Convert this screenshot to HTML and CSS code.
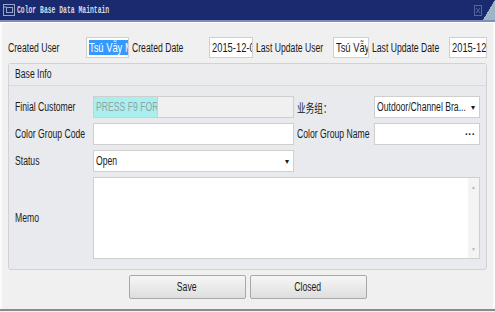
FILE: index.html
```html
<!DOCTYPE html>
<html>

<head>
    <title>Color Base Data Maintain</title>
    <link rel="stylesheet" href="styles.css">
</head>

<body>
    <div class="window">
        <div class="titlebar">
            <svg class="app-icon" width="12" height="12" viewBox="0 0 12 12">
                <rect x="0.5" y="0.5" width="11" height="11" fill="none" stroke="#9aa6c8" />
                <rect x="3.5" y="3.5" width="6" height="5" fill="none" stroke="#9aa6c8" />
                <line x1="0.5" y1="3" x2="3.5" y2="3" stroke="#9aa6c8" />
            </svg>
            <span class="title">Color Base Data Maintain</span>
            <span class="close">
                <svg width="8" height="11" viewBox="0 0 8 11">
                    <rect x="0.5" y="0.5" width="7" height="10" fill="none" stroke="#5866a0" />
                    <path d="M2 3 L6 8 M6 3 L2 8" stroke="#5866a0" />
                </svg>
            </span>
            <span class="corner"></span>
        </div>
        <div class="titleline"></div>

        <div class="content">
            <div class="head-row">
                <label class="w78">Created User</label>
                <span class="field w43"><span class="n selected">Tsú Vẫy Minh</span></span>
                <label class="w77">Created Date</label>
                <span class="field w44"><span class="n">2015-12-01</span></span>
                <label class="w77">Last Update User</label>
                <span class="field w36"><span class="n">Tsú Vẫy</span></span>
                <label class="w77">Last Update Date</label>
                <span class="field w38"><span class="n">2015-12-01</span></span>
            </div>

            <div class="group">
                <div class="group-head"><span class="n">Base Info</span></div>
                <div class="group-body">
                    <label>Finial Customer</label>
                    <span class="field lookup"><span class="hint"><span class="n">PRESS F9 FOR</span></span></span>
                    <label>业务组：</label>
                    <span class="field combo"><span class="val"><span class="n">Outdoor/Channel Bra...</span></span><span class="arrow">▾</span></span>

                    <label>Color Group Code</label>
                    <span class="field"></span>
                    <label>Color Group Name</label>
                    <span class="field combo"><span class="val"></span><span class="dots">···</span></span>

                    <label>Status</label>
                    <span class="field combo"><span class="val"><span class="n">Open</span></span><span class="arrow">▾</span></span>
                    <span></span>
                    <span></span>

                    <label>Memo</label>
                    <div class="memo">
                        <div class="scroll"><span>▲</span><span>▼</span></div>
                    </div>
                </div>
            </div>

            <div class="buttons">
                <button type="button"><span class="n mid">Save</span></button>
                <button type="button"><span class="n mid">Closed</span></button>
            </div>
        </div>
        <div class="bottomline"></div>
    </div>
</body>

</html>
```

FILE: styles.css
```css
/* Win32 style dialog */
body {
    margin: 0;
    width: 495px;
    height: 312px;
    overflow: hidden;
    background: #f0f0f0;
    font-family: "Liberation Sans", "Noto Sans CJK SC", sans-serif;
    font-size: 12px;
    color: #1a1a1a;
}

/* the dialog font is a narrow one, squeeze the text */
label,
.n {
    display: inline-block;
    white-space: nowrap;
    transform: scaleX(0.72);
    transform-origin: left center;
}

.n.mid {
    transform-origin: center;
}

.window {
    height: 312px;
    display: flex;
    flex-direction: column;
}

.titlebar {
    height: 20px;
    background: #1a2a6e;
    display: flex;
    align-items: center;
    position: relative;
    overflow: hidden;
}

.app-icon {
    margin-left: 3px;
}

.title {
    margin-left: 2px;
    font-family: "Liberation Mono", monospace;
    font-size: 10px;
    font-weight: bold;
    color: #d6d8e4;
    white-space: nowrap;
    transform: scaleX(0.64);
    transform-origin: left center;
}

.close {
    margin-left: auto;
    margin-right: 13px;
    display: flex;
}

.corner {
    position: absolute;
    right: 0;
    top: 0;
    width: 12px;
    height: 20px;
    background: linear-gradient(to top left, #9fb4c4 50%, transparent 51%);
}

.titleline {
    height: 2px;
    background: #7d8fb8;
    border-bottom: 1px solid #ffffff;
}

.content {
    flex: 1;
    padding: 0 6px;
    border-left: 2px solid #fafafa;
    border-right: 2px solid #fafafa;
}

.head-row {
    display: flex;
    align-items: center;
    margin-top: 14px;
    height: 21px;
}

.head-row label {
    display: block;
    flex: none;
}

.w78 { width: 78px; }
.w77 { width: 77px; margin-left: 3px; }
.w43 { width: 43px; }
.w44 { width: 44px; }
.w36 { width: 36px; }
.w38 { width: 38px; }

.field {
    box-sizing: border-box;
    height: 22px;
    border: 1px solid #cfcfcf;
    background: #ffffff;
    display: flex;
    align-items: center;
    padding-left: 2px;
    overflow: hidden;
}

.head-row .field {
    height: 21px;
    font-size: 13px;
    flex: none;
}

.selected {
    background: #3399ff;
    color: #ffffff;
    line-height: 15px;
}

.group {
    margin-top: 5px;
    height: 207px;
    box-sizing: border-box;
    border: 1px solid #d2d2d6;
    border-radius: 3px;
    background: #e9eaed;
}

.group-head {
    height: 21px;
    line-height: 21px;
    padding-left: 6px;
    background: #ececee;
    border-bottom: 1px solid #dadade;
}

.group-body {
    display: grid;
    grid-template-columns: 75px 201px 74px 106px;
    column-gap: 3px;
    row-gap: 5px;
    grid-template-rows: 22px 22px 22px 82px;
    padding: 10px 0 0 6px;
    align-items: center;
}

.lookup {
    background: #f0f0f0;
    padding-left: 0;
}

.hint {
    box-sizing: border-box;
    background: #aaeeee;
    color: #8fa6a8;
    height: 100%;
    width: 64px;
    display: flex;
    align-items: center;
    padding-left: 2px;
    border-right: 1px solid #cfcfcf;
    overflow: hidden;
}

.combo .val {
    flex: 1;
    overflow: hidden;
}

.arrow {
    font-size: 8px;
    width: 12px;
    text-align: center;
}

.dots {
    width: 14px;
    font-size: 10px;
    font-weight: bold;
}

.memo {
    grid-column: 2 / 5;
    height: 82px;
    box-sizing: border-box;
    border: 1px solid #cfcfcf;
    background: #ffffff;
    display: flex;
    justify-content: flex-end;
}

.scroll {
    width: 11px;
    background: #f4f4f4;
    display: flex;
    flex-direction: column;
    justify-content: space-between;
    align-items: center;
    font-size: 5px;
    color: #b8b8b8;
    padding: 6px 0;
}

.buttons {
    display: flex;
    justify-content: center;
    gap: 4px;
    margin-top: 5px;
}

.buttons button {
    width: 117px;
    height: 24px;
    font-family: inherit;
    font-size: 12px;
    color: #1a1a1a;
    border: 1px solid #a8a8a8;
    border-radius: 2px;
    background: linear-gradient(#f6f6f6, #dedede);
}

.bottomline {
    height: 2px;
    background: #8a8a8a;
    margin-bottom: 1px;
}
```
